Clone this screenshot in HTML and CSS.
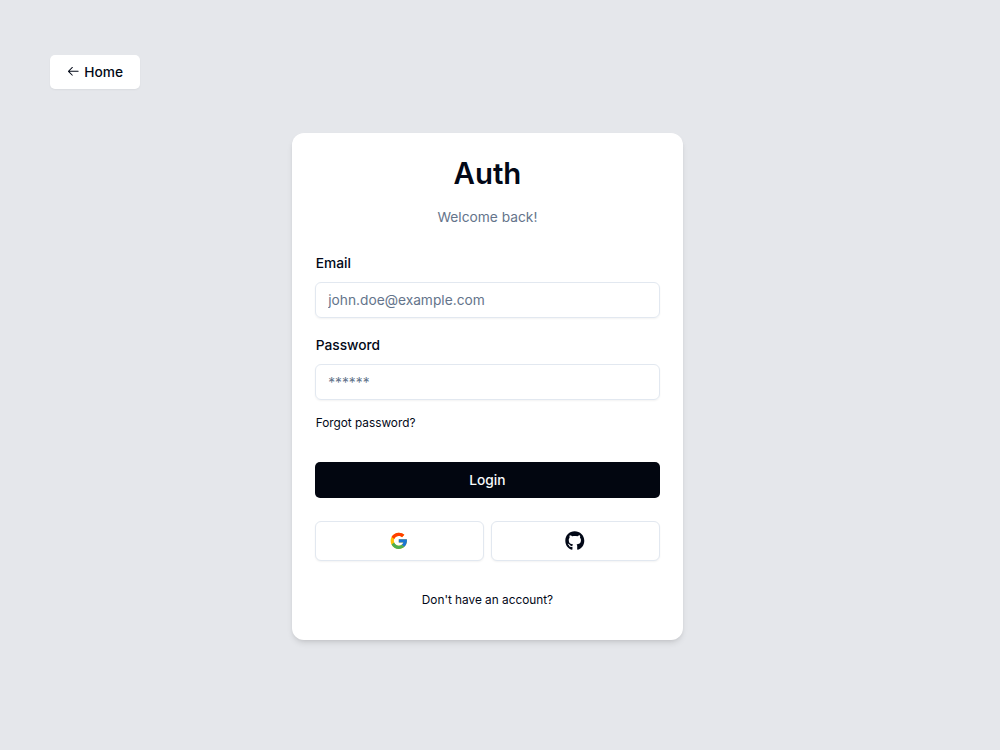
FILE: index.html
```html
<!DOCTYPE html>
<html lang="en">
<head>
<meta charset="UTF-8" />
<title>Auth</title>
<link rel="stylesheet" href="styles.css">
</head>
<body>

<header class="topbar">
  <a class="home-btn" href="#">
    <svg class="arrow" viewBox="0 0 15 15" fill="currentColor">
      <path fill-rule="evenodd" clip-rule="evenodd" d="M6.85355 3.14645C7.04882 3.34171 7.04882 3.65829 6.85355 3.85355L3.70711 7H12.5C12.7761 7 13 7.22386 13 7.5C13 7.77614 12.7761 8 12.5 8H3.70711L6.85355 11.1464C7.04882 11.3417 7.04882 11.6583 6.85355 11.8536C6.65829 12.0488 6.34171 12.0488 6.14645 11.8536L2.14645 7.85355C1.95118 7.65829 1.95118 7.34171 2.14645 7.14645L6.14645 3.14645C6.34171 2.95118 6.65829 2.95118 6.85355 3.14645Z" />
    </svg>
    <span>Home</span>
  </a>
</header>

<main class="card">
  <div class="card-header">
    <h1>Auth</h1>
    <p>Welcome back!</p>
  </div>

  <form class="login-form">
    <div class="field">
      <label for="email">Email</label>
      <input id="email" type="email" placeholder="john.doe@example.com" />
    </div>
    <div class="field">
      <label for="password">Password</label>
      <input id="password" type="password" placeholder="******" />
    </div>
    <a class="link forgot" href="#">Forgot password?</a>
    <button class="login-btn" type="submit">Login</button>
  </form>

  <div class="social">
    <button class="social-btn" type="button" aria-label="Google">
      <svg class="google" viewBox="0 0 48 48">
        <path fill="#FFC107" d="M43.611,20.083H42V20H24v8h11.303c-1.649,4.657-6.08,8-11.303,8c-6.627,0-12-5.373-12-12c0-6.627,5.373-12,12-12c3.059,0,5.842,1.154,7.961,3.039l5.657-5.657C34.046,6.053,29.268,4,24,4C12.955,4,4,12.955,4,24c0,11.045,8.955,20,20,20c11.045,0,20-8.955,20-20C44,22.659,43.862,21.35,43.611,20.083z" />
        <path fill="#FF3D00" d="M6.306,14.691l6.571,4.819C14.655,15.108,18.961,12,24,12c3.059,0,5.842,1.154,7.961,3.039l5.657-5.657C34.046,6.053,29.268,4,24,4C16.318,4,9.656,8.337,6.306,14.691z" />
        <path fill="#4CAF50" d="M24,44c5.166,0,9.86-1.977,13.409-5.192l-6.19-5.238C29.211,35.091,26.715,36,24,36c-5.202,0-9.619-3.317-11.283-7.946l-6.522,5.025C9.505,39.556,16.227,44,24,44z" />
        <path fill="#1976D2" d="M43.611,20.083H42V20H24v8h11.303c-0.792,2.237-2.231,4.166-4.087,5.571c0.001-0.001,0.002-0.001,0.003-0.002l6.19,5.238C36.971,39.205,44,34,44,24C44,22.659,43.862,21.35,43.611,20.083z" />
      </svg>
    </button>
    <button class="social-btn" type="button" aria-label="GitHub">
      <svg class="github" viewBox="0 0 496 512" fill="currentColor">
        <path d="M165.9 397.4c0 2-2.3 3.6-5.2 3.6-3.3.3-5.6-1.3-5.6-3.6 0-2 2.3-3.6 5.2-3.6 3-.3 5.6 1.3 5.6 3.6zm-31.1-4.5c-.7 2 1.3 4.3 4.3 4.9 2.6 1 5.6 0 6.2-2s-1.3-4.3-4.3-5.2c-2.6-.7-5.5.3-6.2 2.3zm44.2-1.7c-2.9.7-4.9 2.6-4.6 4.9.3 2 2.9 3.3 5.9 2.6 2.9-.7 4.9-2.6 4.6-4.6-.3-1.9-3-3.2-5.9-2.9zM244.8 8C106.1 8 0 113.3 0 252c0 110.9 69.8 205.8 169.5 239.2 12.8 2.3 17.3-5.6 17.3-12.1 0-6.2-.3-40.4-.3-61.4 0 0-70 15-84.7-29.8 0 0-11.4-29.1-27.8-36.6 0 0-22.9-15.7 1.6-15.4 0 0 24.9 2 38.6 25.8 21.9 38.6 58.6 27.5 72.9 20.9 2.3-16 8.8-27.1 16-33.7-55.9-6.2-112.3-14.3-112.3-110.5 0-27.5 7.6-41.3 23.6-58.9-2.6-6.5-11.1-33.3 2.6-67.9 20.9-6.5 69 27 69 27 20-5.6 41.5-8.5 62.8-8.5s42.8 2.9 62.8 8.5c0 0 48.1-33.6 69-27 13.7 34.7 5.2 61.4 2.6 67.9 16 17.7 25.8 31.5 25.8 58.9 0 96.5-58.9 104.2-114.8 110.5 9.2 7.9 17 22.9 17 46.4 0 33.7-.3 75.4-.3 83.6 0 6.5 4.6 14.4 17.3 12.1C428.2 457.8 496 362.9 496 252 496 113.3 383.5 8 244.8 8z" />
      </svg>
    </button>
  </div>

  <a class="link signup" href="#">Don't have an account?</a>
</main>

</body>
</html>
```
FILE: styles.css
```css
* {
  box-sizing: border-box;
}
body {
  margin: 0;
  height: 750px;
  overflow: hidden;
  background: #e5e7eb;
  color: #020817;
  font-family: Inter, "Liberation Sans", sans-serif;
  font-size: 13.75px;
}
a {
  color: inherit;
  text-decoration: none;
}
.topbar {
  display: flex;
  padding: 55px 50px 0;
}
.home-btn {
  display: flex;
  align-items: center;
  gap: 4px;
  width: 89.5px;
  height: 33.5px;
  padding-left: 15.5px;
  background: #fff;
  border-radius: 5px;
  box-shadow: 0 1px 2px rgba(0, 0, 0, 0.05);
  font-weight: 500;
}
.arrow {
  width: 14.67px;
  height: 14.67px;
}
.card {
  width: 391.5px;
  height: 506.5px;
  margin: 44.5px 0 0 291.7px;
  padding: 23.5px 23.5px 0;
  background: #fff;
  border-radius: 12px;
  box-shadow: 0 4px 6px -1px rgba(0, 0, 0, 0.1), 0 2px 4px -2px rgba(0, 0, 0, 0.1);
}
.card-header {
  text-align: center;
}
.card-header h1 {
  margin: 0;
  font-size: 29.4px;
  line-height: 34px;
  font-weight: 600;
}
.card-header p {
  margin: 16px 0 0;
  line-height: 20px;
  color: #64748b;
}
.login-form {
  display: flex;
  flex-direction: column;
  margin-top: 29px;
}
.field {
  display: flex;
  flex-direction: column;
  gap: 12px;
  margin-bottom: 20px;
}
.field label {
  padding-left: 0.5px;
  line-height: 14px;
  font-weight: 500;
}
.field input {
  width: 100%;
  height: 36px;
  padding: 0 12px;
  background: transparent;
  border: 1px solid #e2e8f0;
  border-radius: 6px;
  box-shadow: 0 1px 2px rgba(0, 0, 0, 0.05);
  font: inherit;
}
.field input::placeholder {
  color: #64748b;
}
.link {
  font-size: 11.8px;
  line-height: 16px;
}
.forgot {
  align-self: flex-start;
  margin-top: -5px;
  padding-left: 0.5px;
}
.login-btn {
  height: 36px;
  margin-top: 31px;
  border: 0;
  border-radius: 5px;
  background: #020610;
  color: #f8fafc;
  font: inherit;
  font-weight: 500;
}
.social {
  display: grid;
  grid-template-columns: 1fr 1fr;
  gap: 7px;
  margin-top: 23px;
}
.social-btn {
  display: flex;
  align-items: center;
  justify-content: center;
  height: 40px;
  padding: 0 1px 0 0;
  background: #fff;
  border: 1px solid #e2e8f0;
  border-radius: 6px;
  box-shadow: 0 1px 2px rgba(0, 0, 0, 0.05);
  color: #020817;
}
.google,
.github {
  width: 19.6px;
  height: 19.6px;
}
.signup {
  display: block;
  margin-top: 31px;
  text-align: center;
}
```
